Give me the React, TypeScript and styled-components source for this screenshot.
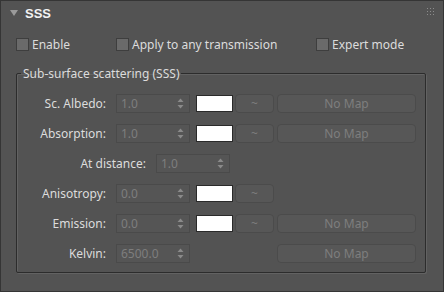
import React from "react";
import styled, { createGlobalStyle } from "styled-components";

const Global = createGlobalStyle`
  html, body { margin: 0; padding: 0; background: #535353; }
  body { font-family: "Noto Sans", "DejaVu Sans", sans-serif; font-size: 12px; color: #dcdcdc; }
`;

const Panel = styled.div`
  box-sizing: border-box;
  width: 444px;
  height: 292px;
  background: #535353;
  border: 1px solid #353535;
  display: flex;
  flex-direction: column;
  position: relative;
`;

const Header = styled.div`
  display: flex;
  align-items: center;
  height: 24px;
  padding-left: 9px;
  gap: 7px;
`;

const Caret = styled.span`
  width: 0;
  height: 0;
  border-left: 4px solid transparent;
  border-right: 4px solid transparent;
  border-top: 6px solid #9a9a9a;
`;

const Title = styled.span`
  font-family: "Liberation Sans", Arial, sans-serif;
  font-weight: bold;
  font-size: 13px;
  color: #f2f2f2;
`;

const Grip = styled.svg`
  position: absolute;
  right: 9px;
  top: 7px;
`;

const CheckRow = styled.div`
  display: flex;
  align-items: center;
  padding-left: 15px;
  margin-top: 11px;
  height: 16px;
`;

const CheckItem = styled.label<{ $w: number }>`
  display: flex;
  align-items: center;
  gap: 3px;
  width: ${(p) => p.$w}px;
`;

const Box = styled.span`
  box-sizing: border-box;
  width: 13px;
  height: 13px;
  background: #6a6a6a;
  border: 1px solid #3e3e3e;
`;

const Group = styled.fieldset`
  box-sizing: border-box;
  margin: 13px 0 0 15px;
  width: 410px;
  height: 208px;
  padding: 12px 0 0 0;
  border: 1px solid #2c2c2c;
  border-radius: 2px;
  box-shadow: 1px 1px 0 #626262, inset 1px 1px 0 #626262;
  display: flex;
  flex-direction: column;
  gap: 11px;
`;

const Legend = styled.legend`
  padding: 0 2px;
  margin-left: 4px;
  color: #dcdcdc;
`;

const Row = styled.div<{ $indent?: number }>`
  display: flex;
  align-items: center;
  height: 19px;
  padding-left: ${(p) => p.$indent ?? 0}px;
`;

const Label = styled.span`
  width: 89px;
  text-align: right;
  margin-right: 10px;
  color: #dcdcdc;
`;

const Spinner = styled.div`
  box-sizing: border-box;
  width: 74px;
  height: 19px;
  border: 1px solid #4a4a4a;
  background: #555555;
  display: flex;
  align-items: center;
  justify-content: space-between;
  padding: 0 5px 0 4px;
  color: #7e7e7e;
`;

const Arrows = styled.svg`
  display: block;
`;

const Swatch = styled.div`
  box-sizing: border-box;
  width: 37px;
  height: 17px;
  margin-left: 6px;
  background: #ffffff;
  border: 1px solid #2a2a2a;
`;

const Btn = styled.div<{ $w: number; $ml: number }>`
  box-sizing: border-box;
  width: ${(p) => p.$w}px;
  height: 19px;
  margin-left: ${(p) => p.$ml}px;
  border: 1px solid #4b4b4b;
  border-radius: 4px;
  background: #575757;
  color: #7e7e7e;
  display: flex;
  align-items: center;
  justify-content: center;
`;

const Spin = ({ value }: { value: string }) => (
  <Spinner>
    <span>{value}</span>
    <Arrows width="7" height="11" viewBox="0 0 7 11">
      <path d="M3.5 0.5 L6.5 4 L0.5 4 Z" fill="#8a8a8a" />
      <path d="M3.5 10.5 L6.5 7 L0.5 7 Z" fill="#8a8a8a" />
    </Arrows>
  </Spinner>
);

const rows = [
  { label: "Sc. Albedo:", value: "1.0" },
  { label: "Absorption:", value: "1.0" },
];

export default function App() {
  return (
    <>
      <Global />
      <Panel>
        <Header>
          <Caret />
          <Title>SSS</Title>
        </Header>
        <Grip width="7" height="7" viewBox="0 0 7 7">
          {[0, 3, 6].map((y) =>
            [0, 3, 6].map((x) => (
              <rect key={`${x}-${y}`} x={x} y={y} width="1" height="1" fill="#8c8c8c" />
            ))
          )}
        </Grip>
        <CheckRow>
          <CheckItem $w={100}>
            <Box />
            Enable
          </CheckItem>
          <CheckItem $w={200}>
            <Box />
            Apply to any transmission
          </CheckItem>
          <CheckItem $w={100}>
            <Box />
            Expert mode
          </CheckItem>
        </CheckRow>
        <Group>
          <Legend>Sub-surface scattering (SSS)</Legend>
          {rows.map((r) => (
            <Row key={r.label}>
              <Label>{r.label}</Label>
              <Spin value={r.value} />
              <Swatch />
              <Btn $w={39} $ml={2}>~</Btn>
              <Btn $w={139} $ml={3}>No Map</Btn>
            </Row>
          ))}
          <Row $indent={40}>
            <Label>At distance:</Label>
            <Spin value="1.0" />
          </Row>
          <Row>
            <Label>Anisotropy:</Label>
            <Spin value="0.0" />
            <Swatch />
            <Btn $w={39} $ml={2}>~</Btn>
          </Row>
          <Row>
            <Label>Emission:</Label>
            <Spin value="0.0" />
            <Swatch />
            <Btn $w={39} $ml={2}>~</Btn>
            <Btn $w={139} $ml={3}>No Map</Btn>
          </Row>
          <Row>
            <Label>Kelvin:</Label>
            <Spin value="6500.0" />
            <Btn $w={139} $ml={87}>No Map</Btn>
          </Row>
        </Group>
      </Panel>
    </>
  );
}
